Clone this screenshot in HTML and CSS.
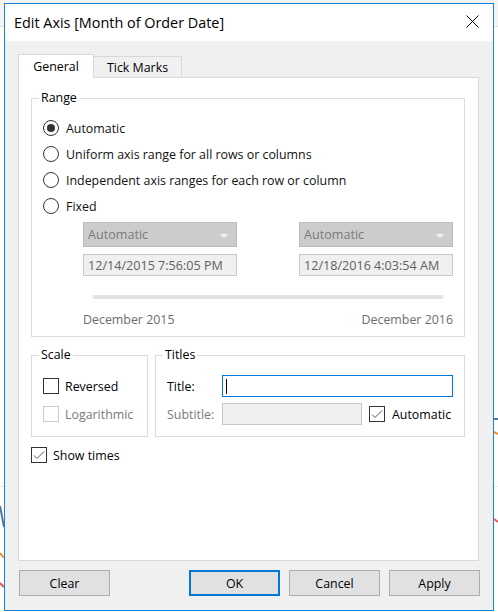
FILE: index.html
```html
<!DOCTYPE html>
<html lang="en">
<head>
  <meta charset="UTF-8" />
  <title>Edit Axis [Month of Order Date]</title>
  <link rel="stylesheet" href="styles.css">
</head>
<body>

<!-- worksheet peeking out around the dialog -->
<svg class="sheet" width="498" height="612" viewBox="0 0 498 612">
  <rect x="0" y="0" width="498" height="26" fill="#f3f3f3"/>
  <line x1="0" y1="26.5" x2="498" y2="26.5" stroke="#dedede"/>
  <line x1="0" y1="486.5" x2="498" y2="486.5" stroke="#e8e8e8"/>
  <polyline points="0,506 4,527" stroke="#4e79a7" stroke-width="2" fill="none"/>
  <polyline points="0,553 4,558" stroke="#f28e2b" stroke-width="2" fill="none"/>
  <polyline points="0,583 4,587" stroke="#e15759" stroke-width="2" fill="none"/>
  <polyline points="494,419 498,419" stroke="#4e79a7" stroke-width="2" fill="none"/>
  <polyline points="494,432 498,434" stroke="#f28e2b" stroke-width="2" fill="none"/>
  <polyline points="494,519 498,522" stroke="#e15759" stroke-width="2" fill="none"/>
</svg>

<div class="dialog">
  <div class="titlebar">
    <span class="title">Edit Axis [Month of Order Date]</span>
    <svg class="close" width="13" height="13" viewBox="0 0 13 13">
      <path d="M0.5 0.5L12.5 12.5M12.5 0.5L0.5 12.5" stroke="#000" stroke-width="1" fill="none"/>
    </svg>
  </div>

  <div class="body">
    <div class="tabs">
      <div class="tab active">General</div>
      <div class="tab">Tick Marks</div>
    </div>

    <div class="panel">
      <!-- Range -->
      <fieldset class="group">
        <legend>Range</legend>
        <div class="range-inner">
          <div class="option"><span class="radio on"></span>Automatic</div>
          <div class="option"><span class="radio"></span>Uniform axis range for all rows or columns</div>
          <div class="option"><span class="radio"></span>Independent axis ranges for each row or column</div>
          <div class="option"><span class="radio"></span>Fixed</div>

          <div class="fixed">
            <div class="bound">
              <div class="select">Automatic<span class="arrow"></span></div>
              <div class="field off">12/14/2015 7:56:05 PM</div>
            </div>
            <div class="bound">
              <div class="select">Automatic<span class="arrow"></span></div>
              <div class="field off">12/18/2016 4:03:54 AM</div>
            </div>
          </div>
          <div class="slider"></div>
          <div class="ends">
            <span>December 2015</span>
            <span>December 2016</span>
          </div>
        </div>
      </fieldset>

      <div class="groups">
        <!-- Scale -->
        <fieldset class="group scale">
          <legend>Scale</legend>
          <div class="small-inner">
            <div class="line"><span class="check"></span>Reversed</div>
            <div class="line muted"><span class="check dim"></span>Logarithmic</div>
          </div>
        </fieldset>

        <!-- Titles -->
        <fieldset class="group titles">
          <legend>Titles</legend>
          <div class="small-inner titles-inner">
            <div class="line">
              <span class="caption">Title:</span>
              <div class="field focus"><span class="caret"></span></div>
            </div>
            <div class="line">
              <span class="caption muted">Subtitle:</span>
              <div class="field off short"></div>
              <span class="check on">
                <svg width="14" height="14" viewBox="0 0 14 14"><polyline points="2,7.5 5,10.5 12,3.5" fill="none" stroke="#555" stroke-width="1"/></svg>
              </span>
              <span class="check-text">Automatic</span>
            </div>
          </div>
        </fieldset>
      </div>

      <div class="line show-times">
        <span class="check on">
          <svg width="14" height="14" viewBox="0 0 14 14"><polyline points="2,7.5 5,10.5 12,3.5" fill="none" stroke="#555" stroke-width="1"/></svg>
        </span>
        Show times
      </div>
    </div>

    <div class="buttons">
      <button class="btn">Clear</button>
      <span class="spacer"></span>
      <button class="btn default">OK</button>
      <button class="btn">Cancel</button>
      <button class="btn">Apply</button>
    </div>
  </div>
</div>

</body>
</html>
```

FILE: styles.css
```css
body {
  margin: 0;
  width: 498px;
  height: 612px;
  position: relative;
  overflow: hidden;
  background: #fff;
  font-family: 'Open Sans', 'Noto Sans', sans-serif;
  font-size: 12.4px;
  color: #111;
}

.sheet {
  position: absolute;
  top: 0;
  left: 0;
}

.dialog {
  position: relative;
  margin: 3px 4px;
  width: 490px;
  height: 608px;
  box-sizing: border-box;
  border: 1px solid #1883d7;
  background: #f0f0f0;
  display: flex;
  flex-direction: column;
}

/* Window title */
.titlebar {
  height: 37px;
  background: #fff;
  display: flex;
  align-items: center;
  padding: 0 14px 0 9px;
  flex-shrink: 0;
}

.title {
  flex: 1;
  font-size: 14.4px;
  color: #000;
}

.close {
  display: block;
  margin-top: -2px;
}

.body {
  flex: 1;
  display: flex;
  flex-direction: column;
  padding: 13px 14px 14px 13px;
}

/* Tabs */
.tabs {
  display: flex;
  align-items: flex-end;
  height: 23px;
  position: relative;
  z-index: 1;
}

.tab {
  box-sizing: border-box;
  height: 21px;
  width: 89px;
  margin-left: -1px;
  border: 1px solid #d9d9d9;
  border-bottom: none;
  background: #f0f0f0;
  display: flex;
  align-items: center;
  justify-content: center;
  color: #000;
}

.tab.active {
  width: 76px;
  height: 24px;
  margin-left: 0;
  margin-bottom: -1px;
  background: #fff;
  padding-bottom: 1px;
}

.panel {
  flex: 1;
  background: #fff;
  border: 1px solid #d9d9d9;
  padding: 12px 13px 0 12px;
}

/* Group boxes */
.group {
  margin: 0;
  padding: 0;
  min-width: 0;
  border: 1px solid #dcdcdc;
}

.group legend {
  margin-left: 7px;
  padding: 0 2px;
  line-height: 16px;
  color: #000;
}

.range-inner {
  padding: 9px 11px 8px 11px;
}

.option {
  height: 26px;
  display: flex;
  align-items: center;
  gap: 7px;
}

.radio {
  width: 16px;
  height: 16px;
  box-sizing: border-box;
  border: 1px solid #333;
  border-radius: 50%;
  display: flex;
  align-items: center;
  justify-content: center;
}

.radio.on::after {
  content: "";
  width: 8px;
  height: 8px;
  border-radius: 50%;
  background: #333;
}

.fixed {
  margin-top: 3px;
  padding-left: 40px;
  display: flex;
  justify-content: space-between;
}

.bound {
  width: 154px;
  display: flex;
  flex-direction: column;
  gap: 7px;
}

.select {
  height: 25px;
  box-sizing: border-box;
  background: #cccccc;
  border: 1px solid #bdbdbd;
  color: #7a7a7a;
  font-size: 12.6px;
  display: flex;
  align-items: center;
  padding: 0 4px;
  position: relative;
}

.arrow {
  position: absolute;
  right: 8px;
  top: 11px;
  border-left: 4px solid transparent;
  border-right: 4px solid transparent;
  border-top: 4px solid #f4f4f4;
}

.field {
  height: 22px;
  box-sizing: border-box;
  border: 1px solid #c8c8c8;
  background: #fff;
  display: flex;
  align-items: center;
  padding: 0 4px;
}

.field.off {
  background: #f0f0f0;
  color: #606060;
  font-size: 12.6px;
}

.slider {
  margin: 19px 10px 0 50px;
  height: 4px;
  background: #e3e3e3;
}

.ends {
  margin: 13px 0 0 40px;
  display: flex;
  justify-content: space-between;
  line-height: 16px;
  color: #6d6d6d;
}

.groups {
  margin-top: 10px;
  display: flex;
  gap: 7px;
}

.scale {
  width: 117px;
  box-sizing: border-box;
}

.titles {
  flex: 1;
}

.small-inner {
  padding: 9px 11px 8px 11px;
}

.line {
  height: 28px;
  display: flex;
  align-items: center;
  gap: 6px;
  color: #000;
}

.muted {
  color: #7a7a7a;
}

.check {
  width: 16px;
  height: 16px;
  box-sizing: border-box;
  border: 1px solid #333;
  background: #fff;
  flex-shrink: 0;
  display: flex;
  align-items: center;
  justify-content: center;
}

.check.dim {
  border-color: #cccccc;
}

.caption {
  width: 49px;
}

.titles-inner .field {
  flex: 1;
}

.field.focus {
  border-color: #0078d7;
  padding-left: 3px;
}

.caret {
  width: 1px;
  height: 15px;
  background: #000;
}

.titles-inner .field.short {
  flex: 0 0 140px;
}

.titles-inner .check {
  margin-left: 1px;
}

.check-text {
  margin-left: 1px;
}

.show-times {
  margin-top: 10px;
  height: 16px;
}

/* Dialog buttons */
.buttons {
  margin: 9px -1px 0 1px;
  display: flex;
  gap: 9px;
}

.spacer {
  flex: 1;
}

.btn {
  width: 91px;
  height: 26px;
  box-sizing: border-box;
  background: #e1e1e1;
  border: 1px solid #adadad;
  font-family: inherit;
  font-size: 12.4px;
  color: #000;
  padding: 0;
}

.btn.default {
  border: 2px solid #0078d7;
}
```
